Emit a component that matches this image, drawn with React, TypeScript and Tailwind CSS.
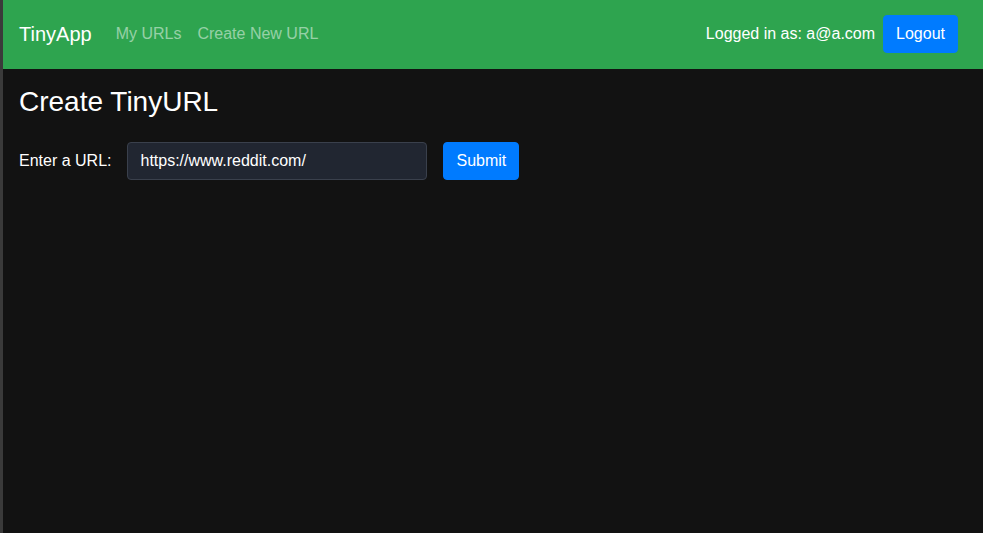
export default function App() {
  return (
    <div className="min-h-[533px] bg-[#121212] border-l-[3px] border-[#3a3a3a] text-white font-['Liberation_Sans',Arial,sans-serif]">
      <nav className="bg-[#2ea44f] flex items-center pt-[15px] pb-[16px] pl-4 pr-[25px]">
        <span className="text-[20px] mr-4">TinyApp</span>
        <div className="flex items-center text-base">
          <a className="px-2 text-white/50">My URLs</a>
          <a className="px-2 text-white/50">Create New URL</a>
        </div>
        <div className="ml-auto flex items-center gap-2">
          <span className="text-base">Logged in as: a@a.com</span>
          <button className="h-[38px] px-3 rounded border border-[#007bff] bg-[#007bff] text-base text-white">Logout</button>
        </div>
      </nav>
      <main className="px-4 pt-4">
        <h3 className="text-[28px] leading-[1.2] mb-[23px]">Create TinyURL</h3>
        <form className="flex items-center gap-4" onSubmit={(e) => e.preventDefault()}>
          <label className="text-base">Enter a URL:</label>
          <input
            defaultValue="https://www.reddit.com/"
            className="w-[300px] h-[38px] px-3 rounded bg-[#212631] border border-[#3a404c] text-base text-white outline-none"
          />
          <button className="h-[38px] px-3 rounded border border-[#007bff] bg-[#007bff] text-base text-white">Submit</button>
        </form>
      </main>
    </div>
  );
}
